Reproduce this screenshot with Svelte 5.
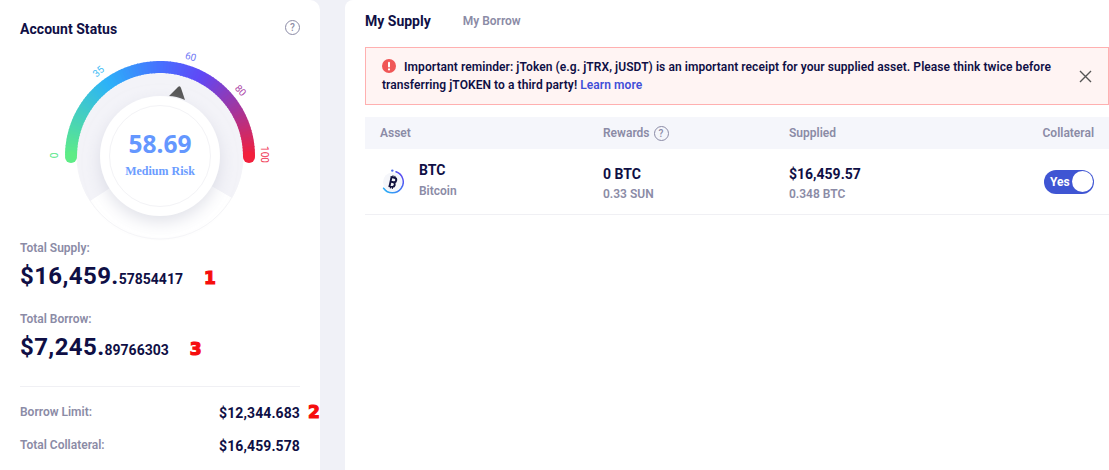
<script>
	const cx = 160;
	const cy = 156;
	const stops = [
		[0, [94, 236, 134]],
		[0.3, [44, 178, 248]],
		[0.5, [70, 112, 255]],
		[0.65, [96, 72, 246]],
		[0.82, [160, 54, 160]],
		[1, [242, 32, 60]]
	];

	const colorAt = (t) => {
		let i = 0;
		while (i < stops.length - 2 && t > stops[i + 1][0]) i++;
		const [t0, c0] = stops[i];
		const [t1, c1] = stops[i + 1];
		const k = (t - t0) / (t1 - t0);
		return `rgb(${c0.map((v, n) => Math.round(v + (c1[n] - v) * k)).join(',')})`;
	};

	const point = (deg, r) => {
		const a = (deg * Math.PI) / 180;
		return [cx - r * Math.cos(a), cy - r * Math.sin(a)];
	};

	const segments = Array.from({ length: 90 }, (_, i) => {
		const [x1, y1] = point(i * 2, 89);
		const [x2, y2] = point(i * 2 + 2.6, 89);
		return { x1, y1, x2, y2, color: colorAt((i + 0.5) / 90) };
	});

	const ticks = [
		{ text: '0', x: 55.5, y: 155.5, rot: -90, color: '#4fe684' },
		{ text: '35', x: 99, y: 72, rot: -42, color: '#45bdf5' },
		{ text: '60', x: 190.5, y: 57.5, rot: 15, color: '#6f78f5' },
		{ text: '80', x: 240, y: 91, rot: 47, color: '#ad48a8' },
		{ text: '100', x: 264, y: 154.5, rot: 90, color: '#f0304f' }
	];
</script>

<div class="page">
	<aside class="status">
		<div class="status-head">
			<h2>Account Status</h2>
			<span class="help big">?</span>
		</div>

		<svg class="gauge" width="320" height="200" viewBox="0 40 320 200">
			<defs>
				<filter id="soft" x="-30%" y="-30%" width="160%" height="160%">
					<feDropShadow dx="0" dy="6" stdDeviation="8" flood-color="#c8cad8" flood-opacity="0.55" />
				</filter>
			</defs>
			<circle cx="160" cy="156" r="83" fill="#fff" stroke="#f5f5f8" />
			<path d="M90 201 A83 83 0 1 1 232 198 L160 156 Z" fill="#f3f3f8" />
			{#each segments as s}
				<line x1={s.x1} y1={s.y1} x2={s.x2} y2={s.y2} stroke={s.color} stroke-width="12" />
			{/each}
			<circle cx="71" cy="157" r="6" fill="#5eec86" />
			<circle cx="249" cy="157" r="6" fill="#f2203c" />
			{#each ticks as t}
				<text class="tick" x={t.x} y={t.y} fill={t.color} transform="rotate({t.rot} {t.x} {t.y})">{t.text}</text>
			{/each}
			<path d="M169 96 L178 87 Q180 85 181 88 L185 100 Q176 96 169 96 Z" fill="#555" />
			<circle cx="160" cy="156" r="60" fill="#fff" filter="url(#soft)" />
			<circle cx="160" cy="156" r="50.5" fill="#fff" stroke="#f3f3f6" />
			<text class="score" x="160" y="153">58.69</text>
			<text class="risk" x="160" y="175">Medium Risk</text>
		</svg>

		<div class="total">
			<p class="label">Total Supply:</p>
			<p class="amount"><span class="big-num">$16,459.</span>57854417<b class="mark">1</b></p>
		</div>
		<div class="total">
			<p class="label">Total Borrow:</p>
			<p class="amount"><span class="big-num">$7,245.</span>89766303<b class="mark">3</b></p>
		</div>

		<div class="limits">
			<div class="limit">
				<span class="label">Borrow Limit:</span>
				<span class="value">$12,344.683<b class="mark two">2</b></span>
			</div>
			<div class="limit">
				<span class="label">Total Collateral:</span>
				<span class="value">$16,459.578</span>
			</div>
		</div>
	</aside>

	<main class="supply">
		<nav class="tabs">
			<span class="tab active">My Supply</span>
			<span class="tab">My Borrow</span>
		</nav>

		<div class="alert">
			<p>
				<svg class="alert-icon" width="14" height="14" viewBox="0 0 14 14">
					<circle cx="7" cy="7" r="7" fill="#f05656" />
					<rect x="6" y="2.8" width="2" height="5.6" rx="1" fill="#fff" />
					<circle cx="7" cy="10.4" r="1.1" fill="#fff" />
				</svg>
				Important reminder: jToken (e.g. jTRX, jUSDT) is an important receipt for your supplied asset. Please think twice before transferring jTOKEN to a third party!
				<a href="#learn">Learn more</a>
			</p>
			<svg class="close" width="13" height="13" viewBox="0 0 13 13">
				<path d="M1 1 L12 12 M12 1 L1 12" stroke="#555" stroke-width="1.4" fill="none" />
			</svg>
		</div>

		<div class="row head">
			<span>Asset</span>
			<span class="rewards">Rewards <span class="help">?</span></span>
			<span>Supplied</span>
			<span class="end">Collateral</span>
		</div>

		<div class="row body">
			<div class="asset">
				<svg width="24" height="26" viewBox="0 0 24 26">
					<defs>
						<linearGradient id="ring" x1="1" y1="0" x2="0" y2="1">
							<stop offset="0" stop-color="#5f3cf0" />
							<stop offset="1" stop-color="#28b6f6" />
						</linearGradient>
					</defs>
					<circle cx="12.5" cy="13" r="9.5" fill="#f5f6fa" />
					<path d="M16 2.8 A10.8 10.8 0 1 1 3.6 19.2" fill="none" stroke="url(#ring)" stroke-width="1.5" stroke-linecap="round" />
					<circle cx="12.3" cy="1.6" r="1.2" fill="#4e6cf0" />
					<g transform="translate(12.5 13) rotate(12)" fill="none" stroke="#10103c">
						<path d="M-3 -4.6 H1 A2.3 2.3 0 0 1 1 0 H-2 M1 0 A2.5 2.5 0 0 1 1 4.8 H-3 M-2 -4.6 V4.8" stroke-width="1.9" />
						<path d="M-0.8 -6.6 V-4.6 M1.2 -6.6 V-4.6 M-0.8 4.8 V6.8 M1.2 4.8 V6.8" stroke-width="1.1" />
					</g>
				</svg>
				<div class="asset-name">
					<p class="main">BTC</p>
					<p class="sub">Bitcoin</p>
				</div>
			</div>
			<div class="metric">
				<p class="main">0 BTC</p>
				<p class="sub">0.33 SUN</p>
			</div>
			<div class="metric">
				<p class="main">$16,459.57</p>
				<p class="sub">0.348 BTC</p>
			</div>
			<div class="end">
				<span class="switch">Yes<i></i></span>
			</div>
		</div>
	</main>
</div>

<style>
	:global(body) {
		background: #f0f1f7;
	}

	.page {
		display: flex;
		gap: 25px;
		height: 470px;
		overflow: hidden;
		font-family: Roboto, "Liberation Sans", sans-serif;
		color: #0f0f45;
	}

	p,
	h2 {
		margin: 0;
	}

	.status {
		flex: 0 0 320px;
		box-sizing: border-box;
		padding: 0 20px;
		background: #fff;
		border-radius: 0 10px 0 0;
	}

	.status-head {
		display: flex;
		align-items: center;
		justify-content: space-between;
		height: 58px;
	}

	h2 {
		font-size: 14px;
		font-weight: 700;
		letter-spacing: 0.05px;
	}

	.help {
		display: inline-flex;
		align-items: center;
		justify-content: center;
		box-sizing: border-box;
		width: 15px;
		height: 15px;
		border: 1px solid #8b8ba6;
		border-radius: 50%;
		font-size: 10px;
		font-weight: 500;
		color: #8b8ba6;
	}

	.help.big {
		margin-top: -3px;
	}

	.gauge {
		display: block;
		margin: -18px -20px 0;
		overflow: visible;
	}

	.tick {
		font-family: Roboto, sans-serif;
		font-size: 10px;
		font-weight: 400;
		text-anchor: middle;
		dominant-baseline: middle;
	}

	.score {
		font-family: "Noto Sans", sans-serif;
		font-size: 24.5px;
		font-weight: 700;
		fill: #6497ff;
		text-anchor: middle;
	}

	.risk {
		font-family: "Liberation Serif", serif;
		font-size: 12px;
		font-weight: 700;
		fill: #6b9cff;
		text-anchor: middle;
	}

	.label {
		font-size: 12px;
		line-height: 14px;
		font-weight: 600;
		color: #8b8ba6;
	}

	.total {
		margin-top: 1px;
		margin-bottom: 19px;
	}

	.amount {
		margin-top: 7px;
		font-size: 14px;
		line-height: 28px;
		font-weight: 700;
	}

	.big-num {
		font-size: 24px;
		letter-spacing: 0.4px;
	}

	.mark {
		margin-left: 21px;
		font-family: "DejaVu Sans", sans-serif;
		font-size: 17px;
		font-weight: 700;
		color: #f60d0d;
		-webkit-text-stroke: 1.2px #f60d0d;
	}

	.limits {
		margin-top: 22px;
		padding-top: 8px;
		border-top: 1px solid #f0f0f4;
	}

	.limit {
		display: flex;
		align-items: center;
		justify-content: space-between;
		height: 33px;
	}

	.value {
		position: relative;
		padding-top: 3px;
		font-size: 14px;
		font-weight: 700;
		letter-spacing: 0.1px;
	}

	.mark.two {
		position: absolute;
		left: 100%;
		top: 0;
		margin-left: 8px;
	}

	.supply {
		flex: 1;
		padding-left: 20px;
		background: #fff;
		border-radius: 8px 0 0 0;
	}

	.tabs {
		display: flex;
		align-items: center;
		gap: 32px;
		height: 47px;
		padding-bottom: 5px;
		box-sizing: border-box;
	}

	.tab {
		font-size: 12px;
		font-weight: 600;
		color: #8b8ba6;
	}

	.tab.active {
		font-size: 14px;
		font-weight: 700;
		color: #0f0f45;
	}

	.alert {
		display: flex;
		align-items: center;
		gap: 20px;
		box-sizing: border-box;
		height: 58px;
		padding: 0 16px;
		border: 1px solid #ffb0b0;
		background: #fff4f3;
	}

	.alert p {
		flex: 1;
		font-size: 12px;
		font-weight: 600;
		line-height: 18px;
		letter-spacing: 0.07px;
	}

	.alert-icon {
		vertical-align: -2px;
		margin-right: 5px;
	}

	.alert a {
		color: #3f4fd8;
		text-decoration: none;
	}

	.close {
		flex: none;
	}

	.row {
		display: grid;
		grid-template-columns: 223px 186px 1fr auto;
		align-items: center;
		padding: 0 15px;
	}

	.head {
		height: 32px;
		margin-top: 12px;
		background: #f5f6fb;
		font-size: 12px;
		font-weight: 600;
		color: #8b8ba6;
	}

	.rewards {
		display: flex;
		align-items: center;
		gap: 4px;
	}

	.body {
		height: 65px;
		border-bottom: 1px solid #f0f0f4;
	}

	.end {
		justify-self: end;
	}

	.asset {
		display: flex;
		align-items: center;
		gap: 15px;
	}

	.asset-name {
		margin-top: -3px;
	}

	.asset-name .sub {
		margin-top: 4px;
	}

	.metric {
		margin-top: 4px;
	}

	.main {
		font-size: 14px;
		font-weight: 700;
		line-height: 18px;
	}

	.sub {
		margin-top: 3px;
		font-size: 12px;
		font-weight: 600;
		line-height: 16px;
		color: #8b8ba6;
	}

	.switch {
		display: flex;
		align-items: center;
		justify-content: space-between;
		box-sizing: border-box;
		width: 50px;
		height: 24px;
		padding: 0 1px 0 6px;
		border-radius: 12px;
		background: #3f55d3;
		font-size: 12px;
		font-weight: 700;
		color: #fff;
	}

	.switch i {
		width: 21px;
		height: 21px;
		border-radius: 50%;
		background: #fff;
	}
</style>
